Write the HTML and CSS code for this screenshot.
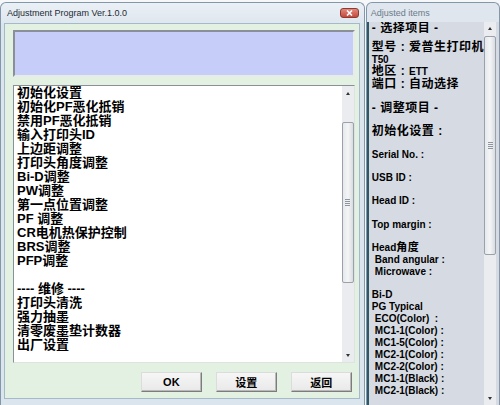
FILE: index.html
```html
<!DOCTYPE html>
<html lang="zh-CN">
<head>
    <meta charset="UTF-8" />
    <title>Adjustment Program Ver.1.0.0</title>
    <link rel="stylesheet" href="styles.css">
</head>
<body>
    <div class="screen">
        <div class="win">
            <div class="titlebar">
                <span class="title">Adjustment Program Ver.1.0.0</span>
                <span class="close">
                    <svg width="7" height="6" viewBox="0 0 7 6"><path d="M1 0.5 L6 5.5 M6 0.5 L1 5.5" stroke="#fff" stroke-width="1.6"/></svg>
                </span>
            </div>
            <div class="client">
                <div class="status"></div>
                <div class="listbox">
                    <ul class="items">
                        <li>初始化设置</li>
                        <li>初始化PF恶化抵销</li>
                        <li>禁用PF恶化抵销</li>
                        <li>输入打印头ID</li>
                        <li>上边距调整</li>
                        <li>打印头角度调整</li>
                        <li>Bi-D调整</li>
                        <li>PW调整</li>
                        <li>第一点位置调整</li>
                        <li>PF 调整</li>
                        <li>CR电机热保护控制</li>
                        <li>BRS调整</li>
                        <li>PFP调整</li>
                        <li>&nbsp;</li>
                        <li>---- 维修 ----</li>
                        <li>打印头清洗</li>
                        <li>强力抽墨</li>
                        <li>清零废墨垫计数器</li>
                        <li>出厂设置</li>
                    </ul>
                    <div class="vscroll list-scroll">
                        <div class="arrow up"></div>
                        <div class="track"><div class="thumb"><span class="grip"></span></div></div>
                        <div class="arrow down"></div>
                    </div>
                </div>
                <div class="buttons">
                    <button class="btn">OK</button>
                    <button class="btn">设置</button>
                    <button class="btn">返回</button>
                </div>
            </div>
        </div>

        <div class="side">
            <div class="side-title">Adjusted items</div>
            <div class="side-body">
                <div class="info">
                    <div class="head">- 选择项目 -</div>
                    <div class="cn gap-s">型号 : 爱普生打印机</div>
                    <div class="small">T50</div>
                    <div class="cn">地区 : <span class="lat">ETT</span></div>
                    <div class="cn">端口 : 自动选择</div>

                    <div class="head gap-l">- 调整项目 -</div>
                    <div class="cn gap-l">初始化设置 :</div>
                    <div class="en gap">Serial No. :</div>
                    <div class="en gap">USB ID :</div>
                    <div class="en gap">Head ID :</div>
                    <div class="en gap-l">Top margin :</div>
                    <div class="en gap-m">Head<span class="cjk">角度</span></div>
                    <div class="en sub">Band angular :</div>
                    <div class="en sub">Microwave :</div>

                    <div class="en gap">Bi-D</div>
                    <div class="en">PG Typical</div>
                    <div class="en sub">ECO(Color)&nbsp; :</div>
                    <div class="en sub">MC1-1(Color) :</div>
                    <div class="en sub">MC1-5(Color) :</div>
                    <div class="en sub">MC2-1(Color) :</div>
                    <div class="en sub">MC2-2(Color) :</div>
                    <div class="en sub">MC1-1(Black) :</div>
                    <div class="en sub">MC2-1(Black) :</div>
                </div>
                <div class="vscroll side-scroll">
                    <div class="arrow up"></div>
                    <div class="track"><div class="thumb"><span class="grip"></span></div></div>
                    <div class="arrow down"></div>
                </div>
            </div>
        </div>
    </div>
</body>
</html>
```

FILE: styles.css
```css
body {
    margin: 0;
    width: 500px;
    height: 405px;
    overflow: hidden;
    background: #f6f7f9;
    font-family: "Liberation Sans", "Noto Sans CJK SC", sans-serif;
    color: #000;
}

.screen {
    display: flex;
    height: 405px;
    padding-top: 2px;
    box-sizing: border-box;
}

/* main window */
.win {
    width: 366px;
    display: flex;
    flex-direction: column;
    background: #dae5ee;
    border: 1px solid #8397ab;
    border-bottom: none;
    border-radius: 6px 6px 0 0;
    box-sizing: border-box;
}

.titlebar {
    height: 20px;
    display: flex;
    align-items: center;
    justify-content: space-between;
    padding: 0 5px 0 6px;
    background: linear-gradient(#eaf0f5, #dfe7ef);
    border-radius: 6px 6px 0 0;
}

.title {
    font-size: 9px;
    color: #1e2a36;
}

.close {
    width: 19px;
    height: 10px;
    display: flex;
    align-items: center;
    justify-content: center;
    background: linear-gradient(#e08a7e, #c6493c);
    border: 1px solid #8d3a31;
    border-radius: 3px;
    box-sizing: border-box;
}

.client {
    flex: 1;
    display: flex;
    flex-direction: column;
    margin: 0 4px 6px 3px;
    padding: 6px 4px 0 8px;
    background: #e2f1e2;
    border: 1px solid #a6b9c8;
}

.status {
    height: 47px;
    box-sizing: border-box;
    background: #c6cdf8;
    border: 2px solid;
    border-color: #8a8f98 #e8ece8 #e8ece8 #8a8f98;
    margin-bottom: 8px;
}

.listbox {
    height: 278px;
    display: flex;
    background: #fff;
    border: 1px solid;
    border-color: #8a8f98 #dde3dd #dde3dd #8a8f98;
    box-sizing: border-box;
}

.items {
    flex: 1;
    list-style: none;
    margin: 0;
    padding: 0 3px;
    font-size: 13px;
    font-weight: bold;
    line-height: 14px;
    overflow: hidden;
    white-space: nowrap;
}

/* scrollbars */
.vscroll {
    width: 12px;
    display: flex;
    flex-direction: column;
    background: #eaecef;
}

.arrow {
    height: 14px;
    display: flex;
    align-items: center;
    justify-content: center;
}

.arrow::after {
    content: "";
    border-left: 2.5px solid transparent;
    border-right: 2.5px solid transparent;
}

.arrow.up::after {
    border-bottom: 3px solid #333;
}

.arrow.down::after {
    border-top: 3px solid #333;
}

.track {
    flex: 1;
}

.thumb {
    display: flex;
    align-items: center;
    justify-content: center;
    background: linear-gradient(90deg, #e6e8eb, #f4f5f7 50%, #d9dce0);
    border: 1px solid #99a1ab;
    border-radius: 2px;
    box-sizing: border-box;
}

.grip {
    width: 5px;
    height: 7px;
    background: repeating-linear-gradient(#8e959e 0 1px, transparent 1px 2px);
}

.list-scroll .track {
    padding-top: 22px;
}

.list-scroll .thumb {
    height: 161px;
}

.side-scroll {
    margin-right: 3px;
}

.side-scroll .arrow.up {
    height: 13px;
}

.side-scroll .track {
    padding-top: 1px;
}

.side-scroll .thumb {
    height: 219px;
}

.buttons {
    display: flex;
    justify-content: flex-end;
    gap: 14px;
    margin-top: 9px;
    padding-right: 3px;
}

.btn {
    width: 61px;
    height: 20px;
    padding: 0;
    font-family: "Liberation Sans", "Noto Sans CJK SC", sans-serif;
    font-size: 11px;
    font-weight: bold;
    background: linear-gradient(#f6f6f6, #e9e9e9);
    border: 1px solid;
    border-color: #dcdcdc #7c7c7c #7c7c7c #dcdcdc;
    box-shadow: inset -1px -1px 0 #b8b8b8;
}

/* adjusted items panel */
.side {
    flex: 1;
    display: flex;
    flex-direction: column;
    margin-left: 1px;
    background: #dfe6ee;
    border: 1px solid #8397ab;
    border-bottom: none;
    border-radius: 6px 6px 0 0;
}

.side-title {
    height: 19px;
    display: flex;
    align-items: center;
    padding-left: 4px;
    font-size: 9px;
    color: #6b7a89;
}

.side-body {
    flex: 1;
    display: flex;
    background: #d6dbe3;
    border-left: 2px solid #2d5866;
    min-height: 0;
}

.info {
    flex: 1;
    padding-left: 3px;
    overflow: hidden;
    white-space: nowrap;
    font-weight: bold;
}

.head {
    font-size: 12px;
    line-height: 12px;
    letter-spacing: 0.5px;
}

.cn {
    font-size: 12px;
    line-height: 13px;
    letter-spacing: 0.5px;
}

.lat {
    font-size: 10px;
    letter-spacing: 0;
}

.cjk {
    font-size: 11px;
    letter-spacing: 0.5px;
}

.small {
    font-size: 10px;
    line-height: 11px;
    letter-spacing: -0.3px;
}

.en {
    font-size: 10px;
    line-height: 12px;
}

.sub {
    padding-left: 3px;
}

.gap-s {
    margin-top: 7px;
}

.gap {
    margin-top: 11px;
}

.gap-m {
    margin-top: 10px;
}

.gap-l {
    margin-top: 12px;
}

.cn.gap-l {
    margin-top: 11px;
}

.head.gap-l {
    margin-top: 11px;
}
```
